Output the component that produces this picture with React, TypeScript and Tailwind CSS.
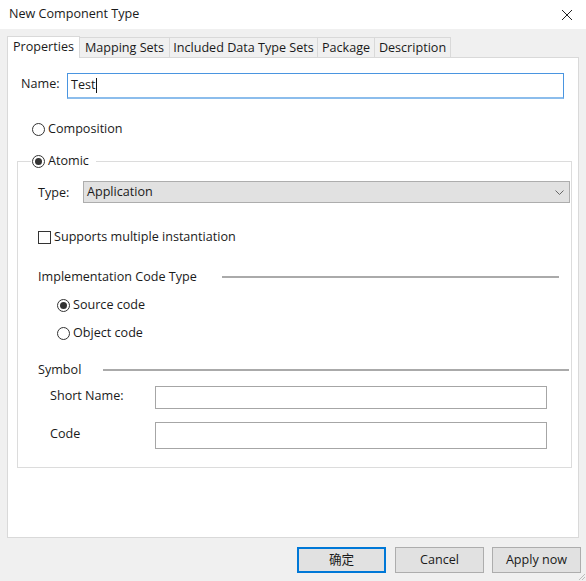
import React from 'react';

const font = { fontFamily: '"Open Sans", "Noto Sans CJK SC", sans-serif' };

function Radio({ checked }: { checked?: boolean }) {
  return (
    <span className="w-[13px] h-[13px] rounded-full border border-[#333] bg-white flex items-center justify-center shrink-0">
      {checked && <span className="w-[7px] h-[7px] rounded-full bg-[#333]" />}
    </span>
  );
}

function Tab({ label, width, active }: { label: string; width: string; active?: boolean }) {
  if (active) {
    return (
      <div className={`${width} h-[22px] bg-white border border-[#d9d9d9] border-b-0 flex items-center justify-center relative z-10 -mb-px`}>
        {label}
      </div>
    );
  }
  return (
    <div className={`${width} h-[20px] bg-[#f0f0f0] border border-[#d9d9d9] border-l-0 border-b-0 flex items-center justify-center pt-px`}>
      {label}
    </div>
  );
}

export default function App() {
  return (
    <div
      className="w-[586px] h-[581px] bg-[#f0f0f0] flex flex-col text-[12.6px] text-[#1a1a1a] overflow-hidden relative"
      style={font}
    >
      {/* title bar */}
      <div className="h-[29px] bg-white flex items-center justify-between pl-[9px] pr-[13px]">
        <span>New Component Type</span>
        <svg width="12" height="12" viewBox="0 0 12 12" className="text-[#222]">
          <path d="M1 1 L11 11 M11 1 L1 11" stroke="currentColor" strokeWidth="1" />
        </svg>
      </div>

      {/* tabs */}
      <div className="flex items-end pl-[7px] mt-[7px]">
        <Tab label="Properties" width="w-[73px]" active />
        <Tab label="Mapping Sets" width="w-[90px]" />
        <Tab label="Included Data Type Sets" width="w-[148px]" />
        <Tab label="Package" width="w-[57px]" />
        <Tab label="Description" width="w-[76px]" />
      </div>

      {/* panel */}
      <div className="ml-[7px] w-[572px] h-[481px] bg-white border border-[#d9d9d9] flex flex-col">
        <div className="flex items-center mt-[15px] ml-[13px]">
          <span className="w-[46px] -mt-[3px]">Name:</span>
          <div className="w-[497px] h-[26px] border border-[#4a95e0] border-b-2 border-b-[#8cbdec] flex items-center pl-[3px] pb-px">
            <span>Test</span>
            <span className="w-px h-[15px] bg-[#111]" />
          </div>
        </div>

        <div className="flex items-center gap-[3px] h-[18px] mt-[21px] ml-[24px]">
          <Radio />
          <span>Composition</span>
        </div>

        <fieldset className="ml-[9px] w-[555px] h-[316px] mt-[14px] border border-[#dcdcdc] flex flex-col">
          <legend className="ml-[13px] pl-[1px] pr-[7px] h-[18px] flex items-center gap-[3px]">
            <Radio checked />
            <span>Atomic</span>
          </legend>

          <div className="flex items-center mt-[11px] pl-[20px] pr-[1px]">
            <span className="w-[45px] mt-[3px]">Type:</span>
            <div className="flex-1 h-[22px] bg-[#e1e1e1] border border-[#adadad] flex items-center justify-between pl-[3px] pr-[5px] pt-px">
              <span>Application</span>
              <svg width="9" height="6" viewBox="0 0 9 6">
                <path d="M0.5 0.5 L4.5 4.5 L8.5 0.5" stroke="#666" fill="none" strokeWidth="1" />
              </svg>
            </div>
          </div>

          <div className="flex items-center gap-[3px] h-[18px] mt-[25px] pl-[20px]">
            <span className="w-[13px] h-[13px] border border-[#333] bg-white shrink-0" />
            <span>Supports multiple instantiation</span>
          </div>

          <div className="flex items-center h-[18px] mt-[22px] pl-[20px] pr-[12px]">
            <span className="w-[184px]">Implementation Code Type</span>
            <div className="flex-1 h-[2px] bg-[#aaaaaa]" />
          </div>

          <div className="flex items-center gap-[3px] h-[18px] mt-[10px] pl-[39px]">
            <Radio checked />
            <span>Source code</span>
          </div>

          <div className="flex items-center gap-[3px] h-[18px] mt-[10px] pl-[39px]">
            <Radio />
            <span>Object code</span>
          </div>

          <div className="flex items-center h-[18px] mt-[19px] pl-[20px] pr-[2px]">
            <span className="w-[65px]">Symbol</span>
            <div className="flex-1 h-[2px] bg-[#aaaaaa]" />
          </div>

          <div className="flex items-center mt-[7px] pl-[32px]">
            <span className="w-[105px] -mt-[3px]">Short Name:</span>
            <div className="w-[392px] h-[23px] border border-[#a6a6a6] bg-white" />
          </div>

          <div className="flex items-center mt-[13px] pl-[32px]">
            <span className="w-[105px] -mt-[3px]">Code</span>
            <div className="w-[392px] h-[27px] border border-[#a6a6a6] bg-white" />
          </div>
        </fieldset>
      </div>

      {/* buttons */}
      <div className="flex mt-[9px] pl-[297px] gap-[9px]">
        <button className="w-[89px] h-[26px] bg-[#e1e1e1] border-2 border-[#0078d7] flex items-center justify-center">
          确定
        </button>
        <button className="w-[89px] h-[26px] bg-[#e1e1e1] border border-[#adadad] flex items-center justify-center">
          Cancel
        </button>
        <button className="w-[89px] h-[26px] bg-[#e1e1e1] border border-[#adadad] flex items-center justify-center -ml-px">
          Apply now
        </button>
      </div>

      {/* resize grip */}
      <svg width="10" height="10" viewBox="0 0 10 10" className="absolute right-0 bottom-0">
        <path d="M9 3 L3 9 M9 6 L6 9" stroke="#bcbcbc" strokeWidth="1" />
      </svg>
    </div>
  );
}
